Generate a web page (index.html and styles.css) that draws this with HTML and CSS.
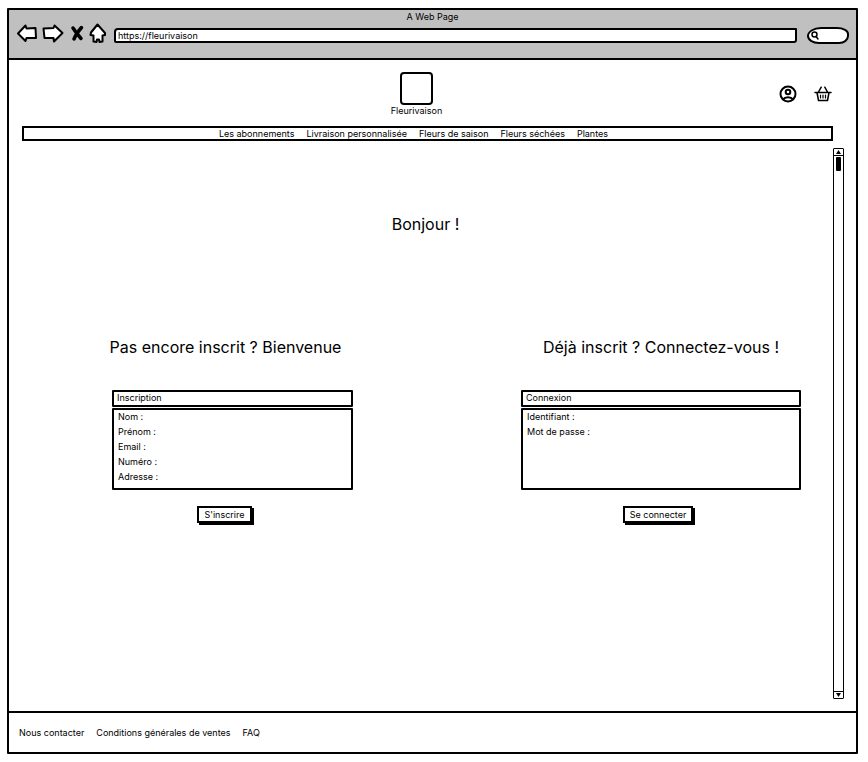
FILE: index.html
```html
<!DOCTYPE html>
<html lang="fr">
<head>
<meta charset="utf-8">
<meta name="viewport" content="width=device-width, initial-scale=1">
<title>Fleurivaison</title>
<link rel="stylesheet" href="styles.css">
</head>
<body>
<div class="window">
  <header class="chrome">
    <div class="chrome-title">A Web Page</div>
    <div class="toolbar">
      <button class="tool" type="button" aria-label="Précédent"><svg width="22" height="20" viewBox="0 0 22 20"><path d="M2 10.500 9.500 2.500 10.500 5.500 19.500 5 20 15 10.500 15 9.500 18Z"/></svg></button>
      <button class="tool" type="button" aria-label="Suivant"><svg width="22" height="20" viewBox="0 0 22 20"><path d="M1.500 5.500 11.500 5 12.500 2.500 20.500 10 12 18.500 11.500 15 2.500 15Z"/></svg></button>
      <button class="tool" type="button" aria-label="Arrêter"><svg width="14" height="18" viewBox="0 0 14 18"><path class="cross" d="M3 4C5 7 8 11 11 14.500M11.500 3.500C8.500 7 6 10 4 15"/></svg></button>
      <button class="tool" type="button" aria-label="Accueil"><svg width="18" height="22" viewBox="0 0 18 22"><path d="M8.500 2.500 16 11 16 13 13.500 13.500 13.500 19.500 10.500 20 10 17.500 8 17.500 7.500 20 4.500 19.500 4.500 13.500 1.500 13 2 10.500Z"/></svg></button>
      <input class="address" type="text" aria-label="Adresse du site" value="https://fleurivaison">
      <label class="search"><svg width="8" height="9" viewBox="0 0 8 9"><circle cx="3.500" cy="3.500" r="2.500"/><path d="M5 5.500 7 8"/></svg><input type="search" aria-label="Rechercher"></label>
    </div>
  </header>

  <div class="site-header">
    <div class="brand"><div class="logo"></div><span>Fleurivaison</span></div>
    <div class="actions">
      <button class="tool" type="button" aria-label="Compte"><svg width="18" height="18" viewBox="0 0 18 18"><circle cx="9" cy="9" r="7.500"/><circle cx="9" cy="7" r="2.300"/><path d="M4 14.300C6 11.500 12 11.500 14 14.300"/></svg></button>
      <button class="tool" type="button" aria-label="Panier"><svg class="thin" width="18" height="18" viewBox="0 0 18 18"><path d="M1 7.500H17M3 7.500 4.500 15.500H13.500L15 7.500M4.500 7 7.200 2.200M13.500 7 10.800 2.200"/><path class="bars" d="M6.500 10V13M9 10V13M11.500 10V13"/></svg></button>
    </div>
  </div>

  <nav class="menu">
    <a href="#">Les abonnements</a>
    <a href="#">Livraison personnalisée</a>
    <a href="#">Fleurs de saison</a>
    <a href="#">Fleurs séchées</a>
    <a href="#">Plantes</a>
  </nav>

  <div class="page">
    <main class="content">
      <h1>Bonjour !</h1>
      <div class="forms">
        <form class="signup">
          <h2>Pas encore inscrit ? Bienvenue</h2>
          <div class="box caption">Inscription</div>
          <div class="box fields">
            <div class="row"><label for="nom">Nom :</label><input id="nom" type="text"></div>
            <div class="row"><label for="prenom">Prénom :</label><input id="prenom" type="text"></div>
            <div class="row"><label for="email">Email :</label><input id="email" type="email"></div>
            <div class="row"><label for="numero">Numéro :</label><input id="numero" type="tel"></div>
            <div class="row"><label for="adresse">Adresse :</label><input id="adresse" type="text"></div>
          </div>
          <button class="submit" type="button">S'inscrire</button>
        </form>
        <form class="login">
          <h2>Déjà inscrit ? Connectez-vous !</h2>
          <div class="box caption">Connexion</div>
          <div class="box fields">
            <div class="row"><label for="identifiant">Identifiant :</label><input id="identifiant" type="text"></div>
            <div class="row"><label for="passe">Mot de passe :</label><input id="passe" type="password"></div>
          </div>
          <button class="submit" type="button">Se connecter</button>
        </form>
      </div>
    </main>
    <div class="scrollbar" aria-hidden="true">
      <div class="arrow"><svg width="5" height="4" viewBox="0 0 5 4"><path d="M2.500 0 5 4H0Z"/></svg></div>
      <div class="track"><div class="thumb"></div></div>
      <div class="arrow end"><svg width="5" height="4" viewBox="0 0 5 4"><path d="M0 0H5L2.500 4Z"/></svg></div>
    </div>
  </div>

  <footer class="footer">
    <a href="#">Nous contacter</a>
    <a href="#">Conditions générales de ventes</a>
    <a href="#">FAQ</a>
  </footer>
</div>
</body>
</html>
```
FILE: styles.css
```css
* { box-sizing: border-box; }

body {
  margin: 0;
  padding: 8px 10px 8px 7px;
  min-height: 100vh;
  display: flex;
  background: #fff;
  color: #000;
  font: 9px/14px Inter, "Liberation Sans", sans-serif;
}

a { color: inherit; text-decoration: none; }

button, input { font: inherit; color: inherit; }

input {
  min-width: 0;
  padding: 0;
  border: 0;
  outline: 0;
  background: transparent;
}

svg {
  display: block;
  fill: none;
  stroke: #000;
  stroke-width: 2;
  stroke-linejoin: round;
  stroke-linecap: round;
}

.window {
  flex: 1;
  display: flex;
  flex-direction: column;
  border: 2px solid #000;
  border-radius: 1px;
}

.chrome {
  height: 50px;
  flex: none;
  background: #c0c0c0;
  border-bottom: 2px solid #000;
}

.chrome-title { text-align: center; }

.toolbar {
  display: flex;
  align-items: center;
  padding: 0 7px;
  gap: 4px;
}

.tool {
  padding: 0;
  border: 0;
  background: none;
}

.toolbar .tool { margin-top: -2px; }
.toolbar .tool:nth-child(3) { margin: -3px 1px 0 2px; }
.toolbar .tool path { fill: #fff; }
.toolbar .tool .cross { fill: none; stroke-width: 3.500; }

.address {
  flex: 1;
  height: 15px;
  margin: 3px 6px 0 3px;
  padding: 0 2px;
  background: #fff;
  border: 2px solid #000;
  border-radius: 4px 1px 3px 2px;
}

.search {
  display: flex;
  align-items: center;
  width: 42px;
  height: 17px;
  margin-top: 3px;
  padding-left: 2px;
  background: #fff;
  border: 2px solid #000;
  border-radius: 14px 12px 10px 12px / 9px 7px 8px 8px;
}

.search svg { stroke-width: 1.500; }
.search input { width: 24px; }

.site-header {
  display: grid;
  grid-template-columns: 1fr auto 1fr;
  align-items: center;
  padding: 12px 24px 9px 0;
}

.brand {
  grid-column: 2;
  display: flex;
  flex-direction: column;
  align-items: center;
  margin-right: 8px;
}

.logo {
  width: 33px;
  height: 33px;
  border: 2px solid #000;
  border-radius: 4px;
}

.brand span { line-height: 12px; }

.actions {
  display: flex;
  justify-content: flex-end;
  gap: 17px;
  padding-bottom: 1px;
}

.actions .thin { stroke-width: 1.500; }
.actions .bars { stroke-width: 1.200; }

.menu {
  display: flex;
  justify-content: center;
  gap: 12px;
  height: 15px;
  margin: 0 23px 0 13px;
  padding-right: 28px;
  border: 2px solid #000;
  line-height: 11px;
}

.page {
  flex: 1;
  display: flex;
  padding: 7px 12px 12px 0;
}

.content { flex: 1; }

h1, h2 {
  margin: 0;
  font-size: 16px;
  line-height: 24px;
  font-weight: 400;
  text-align: center;
}

h1 { margin-top: 64px; padding-left: 9px; }

.forms {
  display: grid;
  grid-template-columns: 103fr 241fr 168fr 280fr 32fr;
  margin-top: 99px;
}

.forms form {
  display: flex;
  flex-direction: column;
}

.signup { grid-column: 2; }
.login { grid-column: 4; }

h2 { margin-bottom: 31px; white-space: nowrap; }

.signup h2 { margin-left: -14px; }

.box { border: 2px solid #000; border-radius: 1px; }

.caption {
  height: 17px;
  padding-left: 3px;
  line-height: 12px;
}

.fields {
  height: 82px;
  margin-top: 1px;
  padding-left: 4px;
}

.row {
  display: flex;
  gap: 4px;
  height: 15px;
}

.row input { flex: 1; }

.submit {
  align-self: center;
  height: 17px;
  margin: 16px 16px 0 0;
  padding: 0 5px;
  background: #fff;
  border: 2px solid #000;
  box-shadow: 2px 2px 0 #000;
  line-height: 13px;
}

.login .submit { margin-right: 6px; }

.scrollbar {
  display: flex;
  flex-direction: column;
  width: 11px;
  border: 1px solid #000;
  border-radius: 1px;
}

.arrow {
  display: flex;
  justify-content: center;
  align-items: center;
  height: 7px;
  border-bottom: 1px solid #000;
}

.arrow.end { border-bottom: 0; border-top: 1px solid #000; }

.arrow svg { fill: #000; stroke: none; }

.track { flex: 1; }

.thumb {
  width: 5px;
  height: 14px;
  margin: 1px auto 0;
  background: #000;
  border-radius: 1px;
}

.footer {
  display: flex;
  align-items: center;
  gap: 12px;
  height: 41px;
  padding: 0 10px;
  border-top: 2px solid #000;
}
```
